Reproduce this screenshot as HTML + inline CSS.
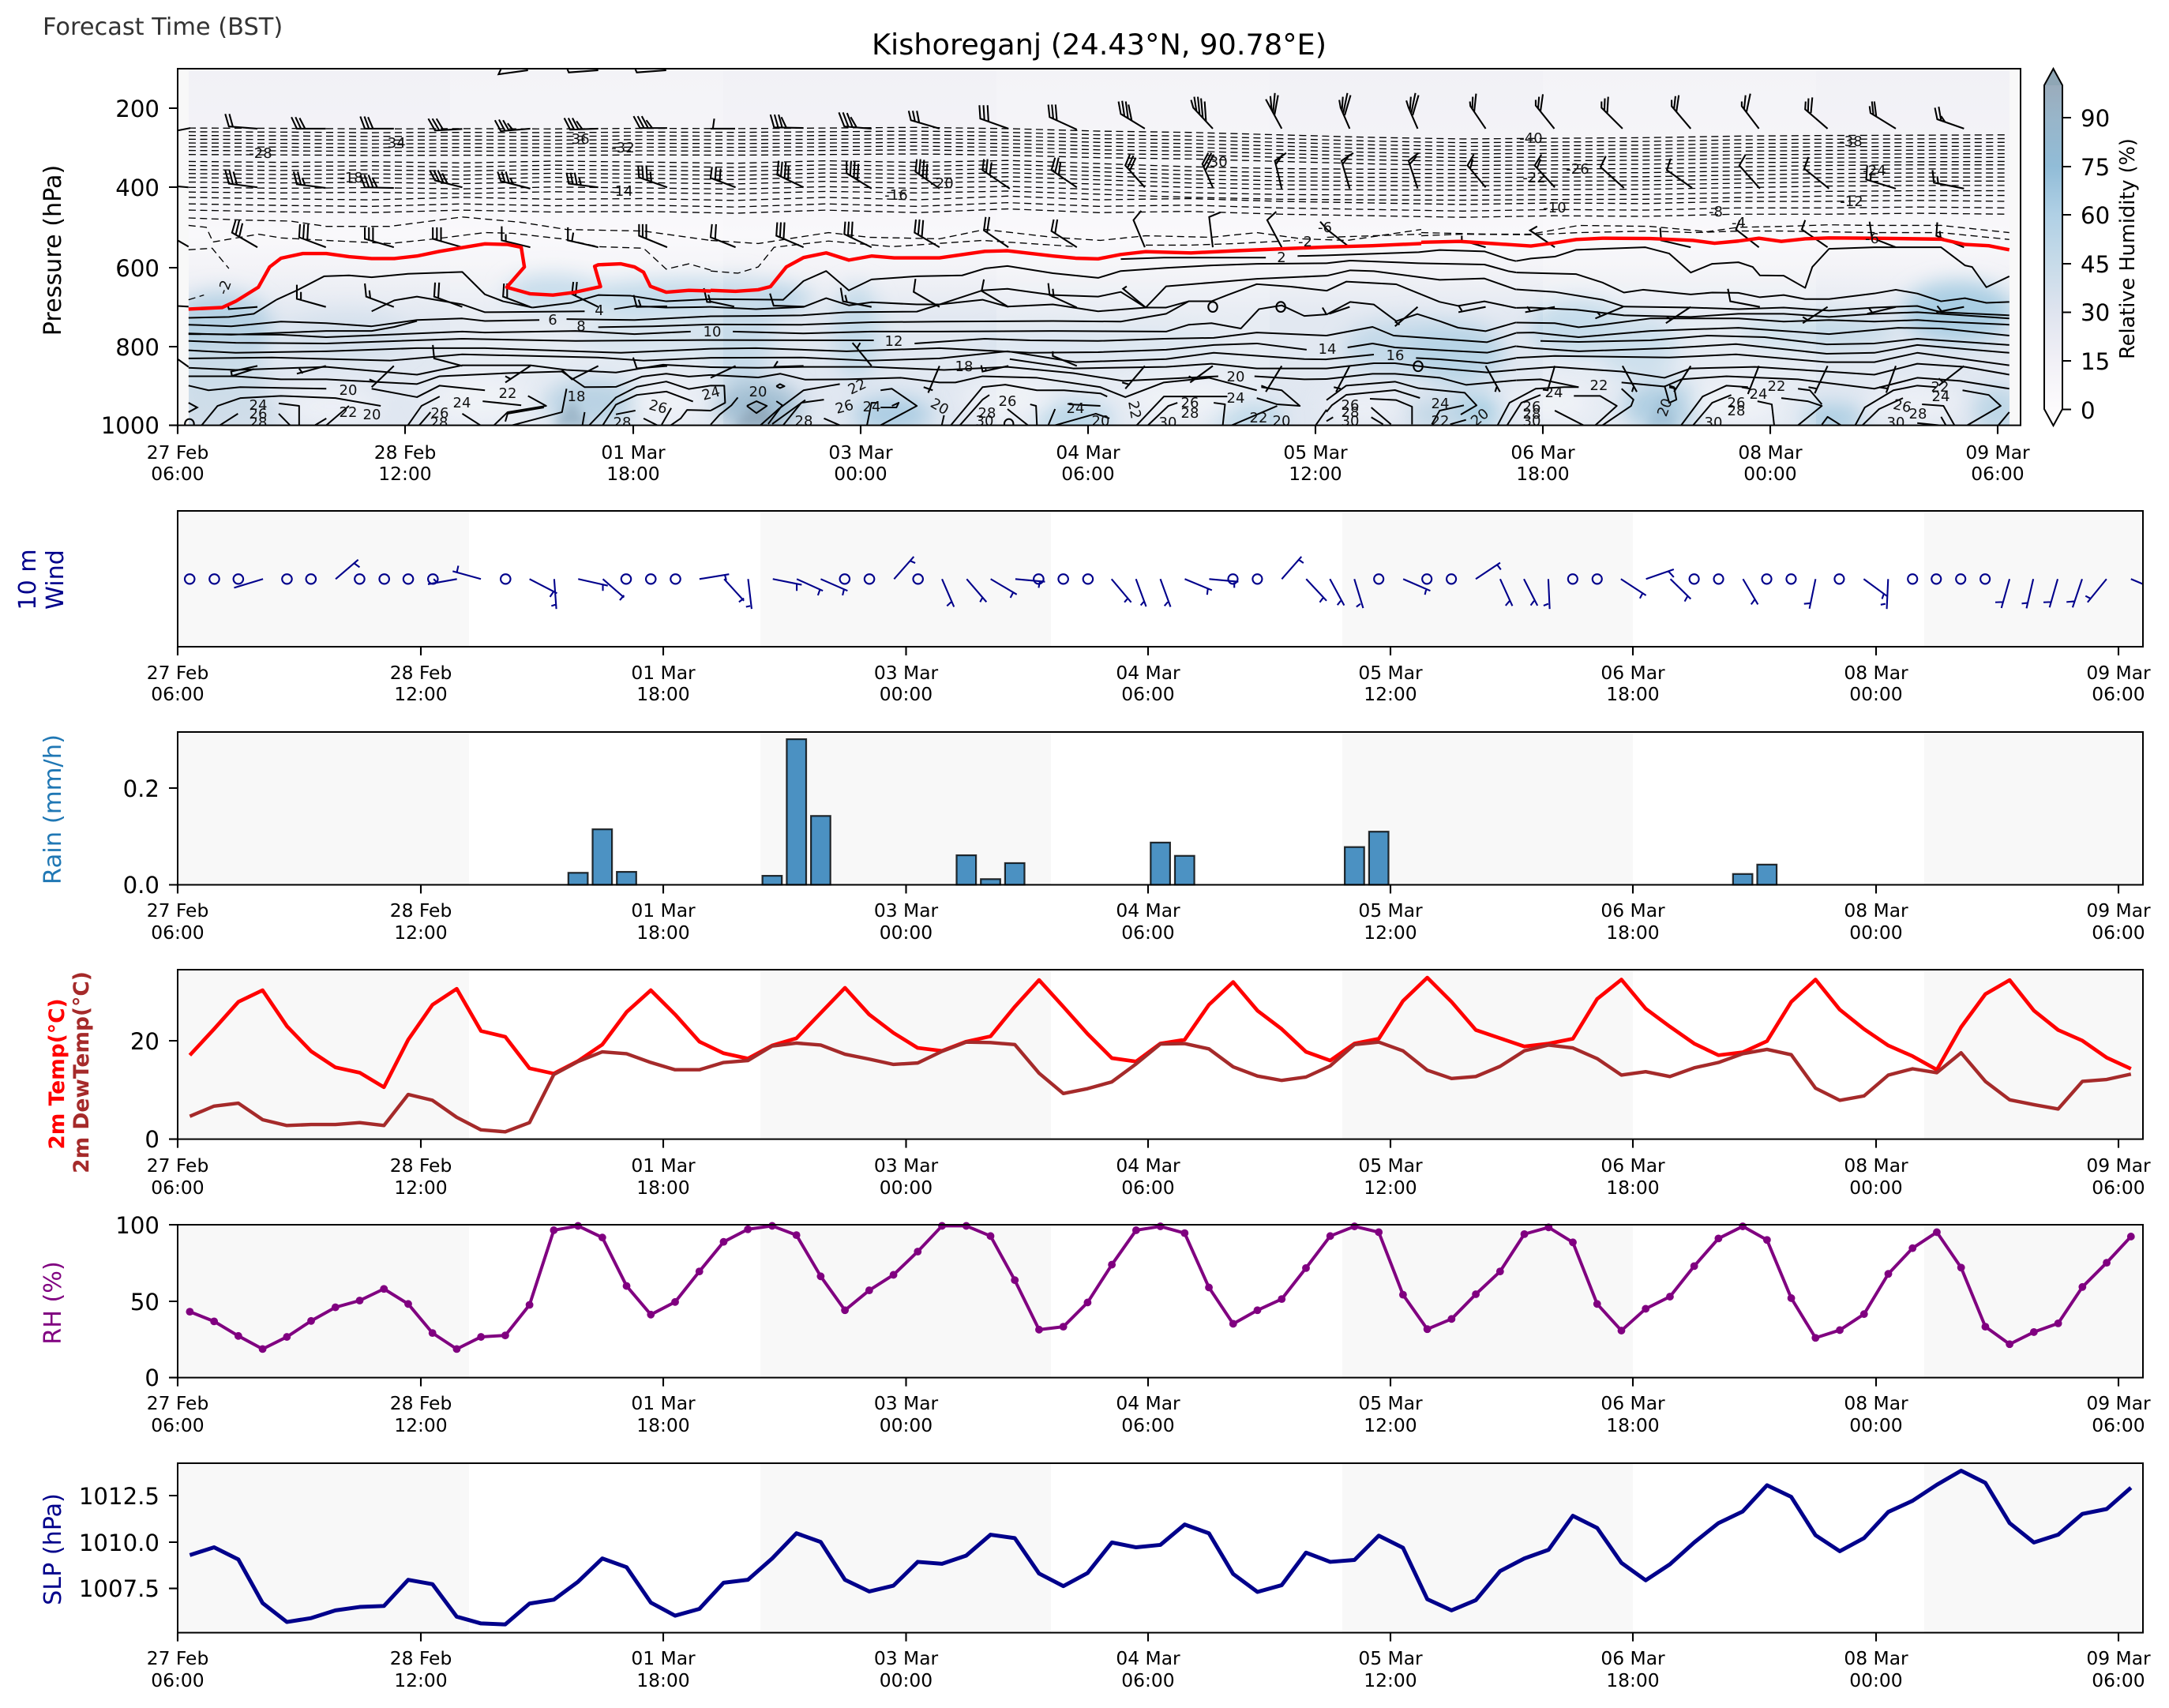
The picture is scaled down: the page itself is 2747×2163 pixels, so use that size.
<!DOCTYPE html>
<html><head><meta charset="utf-8"><title>Kishoreganj</title>
<style>
html,body{margin:0;padding:0;background:#fff}
svg{display:block}
text{font-family:"DejaVu Sans","Liberation Sans",sans-serif;fill:#000}
.ns *{vector-effect:non-scaling-stroke}
.c{fill:none;stroke:#000;stroke-width:2;stroke-linejoin:round}
.d{fill:none;stroke:#000;stroke-width:1.35;stroke-dasharray:9 5.5}
.b{fill:none;stroke:#000;stroke-width:2.1}
.w{fill:none;stroke:#00008b;stroke-width:2.1}
.x{font-size:23.4px;text-anchor:middle}
.y{font-size:29.2px;text-anchor:end}
.l{font-size:18px;text-anchor:middle;fill:#111}
.lab{font-size:30.2px;text-anchor:middle}
</style></head><body>
<svg width="2747" height="2163" viewBox="0 0 2747 2163" xmlns="http://www.w3.org/2000/svg">
<defs>
<clipPath id="tc"><rect x="225" y="87" width="2334" height="451.6"/></clipPath>
<clipPath id="dc"><rect x="239" y="87" width="2306" height="451.6"/></clipPath>
<clipPath id="wc"><rect x="225" y="647" width="2489" height="172"/></clipPath>
<filter id="bl" x="-5%" y="-20%" width="110%" height="140%"><feGaussianBlur stdDeviation="13"/></filter>
<filter id="bl2" x="-5%" y="-20%" width="110%" height="140%"><feGaussianBlur stdDeviation="6"/></filter>
<linearGradient id="bg" x1="0" y1="87" x2="0" y2="538" gradientUnits="userSpaceOnUse">
<stop offset="0" stop-color="#f1f1f6"/><stop offset=".3" stop-color="#f5f4f8"/><stop offset=".47" stop-color="#f9f8fb"/><stop offset=".56" stop-color="#f3f3f7"/><stop offset=".7" stop-color="#e2e8f1"/><stop offset="1" stop-color="#e0e7f1"/></linearGradient>
<linearGradient id="cb" x1="0" y1="108" x2="0" y2="518" gradientUnits="userSpaceOnUse">
<stop offset="0" stop-color="#9aacbc"/><stop offset=".1" stop-color="#98b5c9"/><stop offset=".25" stop-color="#91bcd7"/><stop offset=".4" stop-color="#b0d0e5"/><stop offset=".55" stop-color="#c7dbe9"/><stop offset=".7" stop-color="#dfe4ef"/><stop offset=".85" stop-color="#f1f0f6"/><stop offset="1" stop-color="#fdfbfd"/></linearGradient>
</defs>
<rect width="2747" height="2163" fill="#fff"/>

<text x="54" y="44" style="font-size:30.4px;fill:#333">Forecast Time (BST)</text>
<text x="1392" y="69" style="font-size:36.7px;text-anchor:middle">Kishoreganj (24.43°N, 90.78°E)</text>

<!-- TOP PANEL -->
<rect x="225" y="87" width="2334" height="451.6" fill="#f8f8f8"/>
<g clip-path="url(#dc)">
<rect x="239" y="87" width="2306" height="452" fill="url(#bg)"/>
<g filter="url(#bl)">
<ellipse cx="280" cy="415" rx="65" ry="45" fill="#b5d1e4"/>
<ellipse cx="280" cy="480" rx="60" ry="45" fill="#ccdde9"/>
<ellipse cx="440" cy="425" rx="80" ry="30" fill="#d5e1ed"/>
<ellipse cx="290" cy="525" rx="70" ry="25" fill="#cfdde9"/>
<ellipse cx="700" cy="370" rx="60" ry="22" fill="#bcd6e8"/>
<ellipse cx="880" cy="378" rx="150" ry="24" fill="#b5d3e6"/>
<ellipse cx="850" cy="425" rx="120" ry="30" fill="#d0e0ec"/>
<ellipse cx="935" cy="420" rx="45" ry="70" fill="#c8dcea"/>
<ellipse cx="750" cy="510" rx="60" ry="30" fill="#aac9de"/>
<ellipse cx="960" cy="515" rx="55" ry="32" fill="#a3bfd3"/>
<ellipse cx="1085" cy="420" rx="30" ry="60" fill="#c4dbea"/>
<ellipse cx="1130" cy="525" rx="50" ry="22" fill="#aacce2"/>
<ellipse cx="1360" cy="530" rx="50" ry="20" fill="#a8cde3"/>
<ellipse cx="1580" cy="530" rx="45" ry="18" fill="#b0d1e5"/>
<ellipse cx="1400" cy="435" rx="160" ry="22" fill="#d6e2ee"/>
<ellipse cx="1790" cy="440" rx="90" ry="35" fill="#c3d9e9"/>
<ellipse cx="1845" cy="448" rx="60" ry="38" fill="#b7d4e6"/>
<ellipse cx="1865" cy="522" rx="35" ry="22" fill="#a8cfe3"/>
<ellipse cx="2000" cy="415" rx="60" ry="35" fill="#b9d5e7"/>
<ellipse cx="2075" cy="440" rx="50" ry="40" fill="#c2d9e9"/>
<ellipse cx="2105" cy="515" rx="50" ry="30" fill="#9fc4dc"/>
<ellipse cx="1820" cy="525" rx="35" ry="20" fill="#c1d7e6"/>
<ellipse cx="2320" cy="530" rx="40" ry="18" fill="#aacde2"/>
<ellipse cx="2480" cy="395" rx="70" ry="38" fill="#a9cee3"/>
<ellipse cx="2300" cy="420" rx="100" ry="22" fill="#c6dbe9"/>
<ellipse cx="2530" cy="520" rx="30" ry="30" fill="#bcd6e6"/>
</g>
<g filter="url(#bl)" fill="#f1f3f8" opacity=".7">
<ellipse cx="600" cy="505" rx="65" ry="30"/><ellipse cx="420" cy="515" rx="60" ry="26"/><ellipse cx="840" cy="510" rx="45" ry="22"/>
<ellipse cx="1275" cy="505" rx="60" ry="26"/><ellipse cx="1500" cy="505" rx="70" ry="26"/><ellipse cx="1725" cy="515" rx="50" ry="22"/>
<ellipse cx="1960" cy="510" rx="55" ry="24"/><ellipse cx="2195" cy="510" rx="60" ry="26"/><ellipse cx="2425" cy="510" rx="60" ry="26"/>
</g>
<g filter="url(#bl2)">
<path d="M700 540L725 505L745 540Z" fill="#8aa9bf"/>
<path d="M930 540L960 505L990 540Z" fill="#93aabd"/>
<path d="M2085 540L2105 500L2125 540Z" fill="#8fb6d0"/>
</g>
<rect x="570" y="87" width="346" height="452" fill="#fff" opacity=".18"/>
<rect x="1262" y="87" width="346" height="452" fill="#fff" opacity=".18"/>
<rect x="1954" y="87" width="346" height="452" fill="#fff" opacity=".18"/>
</g>

<g clip-path="url(#tc)">
<!-- dashed family, i/zoom coordinates -->
<g class="ns" transform="translate(239,0) scale(28.81,.3954)">
<defs>
<polyline id="s1" class="d" points="0,410 4,411 8,413 12,412 16,413 20,411 24,412 28,410 32,408 36,412 40,420 44,424 48,432 52,440 56,445 60,443 64,441 68,436 72,434 76,433 80,432"/>
<polyline id="s2" class="d" points="0,517 4,520 8,518 12,522 16,516 20,519 24,523 28,515 32,520 36,514 40,524 44,534 48,540 52,542 56,543 60,541 64,540 68,535 72,530 76,528 80,528"/>
<polyline id="s3" class="d" points="0,632 4,637 8,640 12,632 16,638 20,636 24,642 28,632 32,640 36,628 40,640 44,636 48,645 52,650 56,655 60,650 64,652 68,645 72,645 76,642 80,645"/>
</defs>
<use href="#s1"/><use href="#s1" y="12"/><use href="#s1" y="24"/><use href="#s1" y="36"/><use href="#s1" y="48"/><use href="#s1" y="60"/><use href="#s1" y="72"/><use href="#s1" y="85"/>
<use href="#s2"/><use href="#s2" y="13"/><use href="#s2" y="26"/><use href="#s2" y="39"/><use href="#s2" y="52"/><use href="#s2" y="66"/><use href="#s2" y="83"/><use href="#s2" y="98"/>
<use href="#s3"/><use href="#s3" y="21"/><use href="#s3" y="41"/>
</g>

<!-- zoom 1 -->
<g class="ns" transform="scale(.574,.3954)">
<polyline class="d" points="416,698 540,705 640,708 720,725 860,725 1020,695 1150,712 1250,735 1420,740 1568,770"/>
<polyline class="d" points="470,775 570,750 620,762 720,770 860,780 960,765 1070,745 1130,747 1240,765 1320,790 1420,795 1470,862 1520,845 1568,865"/>
<polyline class="d" points="416,722 455,728 470,775"/>
<polyline class="d" points="416,800 468,795 505,860"/>
<polyline class="d" points="416,960 450,945"/>
<polyline class="c" points="610,960 655,930 715,885 770,882 820,888 900,877 1020,871 1070,943 1110,965 1175,985"/>
<polyline class="c" points="820,997 870,962 920,950 1020,975 1070,1000 1290,997"/>
<polyline class="c" points="1355,990 1400,980 1470,985 1568,983"/>
<polyline class="c" points="1175,985 1260,970 1320,945 1390,947 1470,965 1568,958"/>
<polyline class="c" points="416,1018 505,1015 560,1005 610,960"/>
<polyline class="c" points="416,1040 510,1045 620,1030 720,1035 820,1045 920,1025 1020,1020 1070,1028 1190,1025"/>
<polyline class="c" points="1250,1022 1400,1025 1568,1013"/>
<polyline class="c" points="416,1068 510,1072 720,1060 820,1060 870,1047 920,1028"/>
<polyline class="c" points="1320,1048 1440,1045 1568,1039"/>
<polyline class="c" points="416,1070 620,1072 720,1080 1020,1062 1070,1065 1270,1060 1400,1070 1524,1062"/>
<polyline class="c" points="416,1092 520,1098 720,1100 1020,1085 1270,1092 1568,1089"/>
<polyline class="c" points="416,1122 520,1130 720,1125 920,1115 1070,1115 1370,1130 1568,1117"/>
<polyline class="c" points="416,1148 600,1145 860,1155 1020,1135 1320,1145 1420,1155 1568,1146"/>
<polyline class="c" points="416,1178 520,1185 720,1175 920,1200 1020,1170 1170,1170 1250,1185 1359,1193 1463,1168 1568,1176"/>
<polyline class="c" points="416,1205 520,1205 620,1215 720,1215 920,1230 970,1205 1120,1195 1240,1190 1290,1240 1359,1239 1417,1206 1470,1197 1520,1206 1568,1201"/>
<polyline class="c" points="416,1235 460,1250 530,1240 720,1245"/>
<polyline class="c" points="820,1245 920,1272 970,1235 1070,1250"/>
<polyline class="c" points="445,1362 480,1300 530,1275 620,1268 740,1275 840,1300"/>
<polyline class="c" points="485,1362 525,1325"/>
<polyline class="c" points="615,1292 660,1300 660,1362"/>
<polyline class="c" points="615,1325 640,1362"/>
<polyline class="c" points="695,1362 720,1340"/>
<polyline class="c" points="720,1362 770,1300"/>
<polyline class="c" points="900,1362 930,1300 970,1270"/>
<polyline class="c" points="925,1362 950,1320"/>
<polyline class="c" points="1065,1285 1150,1298"/>
<polyline class="c" points="1020,1325 1060,1362"/>
<polyline class="c" points="1090,1362 1120,1320 1205,1300 1165,1268"/>
<polyline class="c" points="1115,1350 1120,1325 1200,1305"/>
<polyline class="c" points="1130,1362 1240,1320 1250,1245"/>
<polyline class="c" points="1285,1362 1290,1320"/>
<polyline class="c" points="1300,1362 1359,1273 1405,1239 1470,1222 1520,1246 1568,1235"/>
<polyline class="c" points="1330,1362 1359,1296 1405,1265 1470,1254 1529,1286"/>
<polyline class="c" points="1359,1327 1402,1315"/>
<polyline class="c" points="1481,1307 1460,1360"/>
<polyline class="c" points="1420,1340 1450,1362"/>
<polyline class="c" points="1568,1315 1516,1313 1502,1340 1480,1362"/>
<path class="b" d="M392 418L420 410M392 597L416 600M392 770L416 790M392 980L416 982M392 1150L416 1175M416 1290L435 1305L416 1320"/>
<ellipse class="b" cx="418" cy="1358" rx="10" ry="16"/>
<path class="b" d="M568 412L505 405L497 365M514 407L506 365M719 412L655 412L643 375M664 412L652 375M673 412L661 378M869 412L805 412L795 373M814 412L804 373M823 412L812 375M1020 413L960 418L945 380M969 417L954 380M978 416L963 380M1170 412L1105 420L1092 385M1114 419L1101 383M1123 418L1110 385M1132 417L1120 395M1320 412L1258 415L1245 378M1267 415L1254 378M1276 414L1263 378M1285 414L1272 388M1472 410L1412 410L1398 372M1421 410L1407 372M1430 410L1416 372M1439 410L1426 385"/>
<path class="b" d="M568 600L505 588L497 545M514 590L506 545M523 592L515 550M719 602L655 590L648 550M664 592L657 550M673 594L667 570M869 602L805 600L795 560M814 600L804 560M823 600L813 560M832 600L822 570M1020 600L960 578L948 545M969 581L957 545M978 584L966 545M987 587L976 555M1170 604L1105 580L1098 550M1114 583L1107 550M1123 586L1116 550M1132 589L1126 570M1320 600L1255 588L1250 553M1264 590L1259 553M1273 592L1268 553M1282 593L1278 570M1472 600L1410 568L1408 530M1419 572L1417 530M1428 576L1426 530M1437 580L1435 550"/>
<path class="b" d="M568 792L512 745L520 705M520 752L528 705M528 758L535 715M719 792L660 760L662 718M669 765L671 718M678 770L680 718M869 792L805 765L805 728M814 769L814 728M823 773L823 728M1020 792L955 765L955 728M964 769L964 728M973 773L973 728M1170 792L1107 770L1107 725M1116 773L1116 750M1320 792L1253 770L1253 728M1262 773L1265 745M1472 792L1410 755L1410 718M1418 760L1418 718M1426 765L1426 718"/>
<path class="b" d="M568 983L505 990L502 975M719 983L655 957L655 912M664 961L664 935M869 983L808 950L805 908M817 955L815 930M1020 983L958 950L960 905M967 954L969 905M1170 983L1110 950L1112 908M1119 954L1119 908M1320 983L1262 942L1265 903M1270 948L1273 903M1472 981L1405 983L1398 945M1414 982L1409 960M1568 968L1560 967L1553 923M1568 970L1563 944"/>
<path class="b" d="M568 1172L510 1190L512 1205M560 1182L510 1205M719 1172L655 1197M660 1180L668 1196M869 1172L820 1240M815 1215L832 1225M1020 1172L958 1148L955 1105M1170 1172L1115 1225M1115 1205L1128 1215M1320 1172L1262 1215L1240 1185M1472 1172L1405 1180L1397 1145"/>
<path class="b" d="M1165 225L1100 238L1105 222M1320 225L1255 232L1252 222M1470 225L1405 232L1402 222"/>
<polyline fill="none" stroke="#f00" stroke-width="4.4" stroke-linejoin="round" points="416,990 490,985 520,965 570,920 595,855 620,827 668,812 720,812 770,822 820,828 870,828 920,820 970,805 1020,793 1070,781 1120,783 1150,792 1157,855 1118,920 1170,941 1220,945 1265,937 1325,918 1312,853 1320,848 1370,845 1400,855 1420,872 1435,917 1470,936 1520,930 1568,932"/>
</g>

<!-- zoom 2 -->
<g class="ns" transform="translate(900,0) scale(.574,.3954)">
<polyline class="d" points="0,770 105,780 260,745 350,760 505,765 605,735 755,760 860,770 960,755 1105,760 1205,745 1305,765 1405,770 1568,735"/>
<polyline class="d" points="0,868 60,875 105,855 140,792 260,772 400,790 600,770 755,785 805,790"/>
<polyline class="d" points="960,785 1060,785 1160,780 1290,770"/>
<polyline class="d" points="1360,760 1568,750"/>
<polyline class="c" points="905,830 1000,825 1225,825"/>
<polyline class="c" points="1295,820 1359,818"/>
<polyline class="c" points="0,958 160,960 205,900 255,868 305,930 355,895 455,885 555,882 605,860 655,852 755,875 855,890 905,868 1005,858 1105,850 1205,845 1359,843"/>
<polyline class="c" points="0,983 100,990 205,983 255,955 305,978 355,968 455,975 505,975 600,930 655,925 705,935 755,945 855,950 905,935 960,985 1005,917 1105,905 1205,893 1359,883"/>
<polyline class="c" points="0,1013 100,1012 200,1010 300,1000 455,998 505,975 600,960 655,982 755,975 855,997 960,985 1005,985 1055,965 1105,965 1140,945 1205,910 1280,918 1359,931"/>
<polyline class="c" points="0,1039 200,1040 355,1032 505,1030 755,1028 905,1030 1005,1005 1055,965 1105,965"/>
<polyline class="c" points="49,1062 205,1068 355,1062 505,1062 755,1060 1005,1062 1055,1040 1105,1035 1170,1052 1210,990 1260,978 1310,1012 1359,1007"/>
<polyline class="c" points="0,1089 360,1090"/>
<polyline class="c" points="450,1100 605,1085 705,1090 855,1092 1000,1085 1110,1082 1205,1065 1359,1075"/>
<polyline class="c" points="0,1117 100,1115 300,1125 505,1115 705,1130 855,1128 1005,1120 1110,1105 1205,1100 1315,1120"/>
<polyline class="c" points="0,1146 200,1145 350,1155 505,1148 655,1125 805,1160 1005,1150 1110,1130 1310,1150 1359,1151"/>
<polyline class="c" points="660,1150 800,1180 1005,1175 1105,1165 1205,1180 1359,1180"/>
<polyline class="c" points="0,1176 105,1178 209,1175 355,1175 515,1185 655,1175 800,1195 910,1220 1120,1205"/>
<polyline class="c" points="1200,1205 1310,1215 1359,1214"/>
<polyline class="c" points="0,1201 105,1209 154,1197 209,1216 300,1215 420,1210 505,1225 540,1225 600,1205 720,1210 860,1240 915,1272 1000,1225 1100,1210 1205,1250"/>
<polyline class="c" points="0,1235 30,1235 32,1290 0,1315"/>
<polyline class="c" points="80,1300 101,1285 124,1300 101,1323 80,1300"/>
<polyline class="c" points="145,1237 153,1230 163,1237 153,1243 145,1237"/>
<polyline class="c" points="60,1273 46,1298 20,1328 0,1360"/>
<polyline class="c" points="145,1285 158,1298 127,1358"/>
<polyline class="c" points="209,1281 136,1358"/>
<polyline class="c" points="110,1362 150,1310 205,1250 265,1235 285,1230"/>
<polyline class="c" points="160,1362 200,1290 250,1280"/>
<polyline class="c" points="250,1340 285,1362"/>
<polyline class="c" points="345,1362 355,1290 370,1290"/>
<polyline class="c" points="375,1250 400,1245 455,1300 375,1362"/>
<polyline class="c" points="400,1300 415,1290 410,1305 375,1305"/>
<polyline class="c" points="510,1362 515,1330"/>
<polyline class="c" points="530,1362 600,1240 650,1232 720,1250 780,1250 860,1260 875,1270"/>
<polyline class="c" points="550,1362 600,1280 615,1265"/>
<polyline class="c" points="655,1310 700,1362"/>
<polyline class="c" points="705,1295 718,1300 720,1362"/>
<polyline class="c" points="745,1362 760,1310"/>
<polyline class="c" points="760,1362 850,1325 880,1340"/>
<polyline class="c" points="790,1295 860,1300"/>
<polyline class="c" points="940,1362 1000,1270 1140,1270"/>
<polyline class="c" points="965,1362 1010,1300 1030,1290"/>
<polyline class="c" points="1110,1290 1135,1295 1130,1362"/>
<polyline class="c" points="1205,1275 1250,1295 1300,1300 1260,1250 1215,1240"/>
<polyline class="c" points="1150,1362 1250,1300"/>
<polyline class="c" points="1335,1362 1359,1312"/>
<ellipse class="b" cx="1108" cy="983" rx="10" ry="16"/><ellipse class="b" cx="1258" cy="983" rx="10" ry="16"/><ellipse class="b" cx="1561" cy="1173" rx="10" ry="16"/><ellipse class="b" cx="658" cy="1358" rx="10" ry="16"/>
<path class="b" d="M54 412L0 412M5 412L8 380M205 410L140 408L132 367M149 408L141 367M158 409L150 367M167 409L156 375M355 412L295 405L283 360M304 406L292 360M313 407L301 362M322 408L309 375M505 412L442 385L437 355M451 389L446 355M460 392L455 355M657 412L595 380L593 337M604 384L602 337M613 389L611 337M808 415L748 375L745 335M756 381L753 335M764 387L761 335M958 412L905 365L900 325M913 372L908 323M921 379L916 325M929 386L922 335M1108 412L1065 345L1060 320M1072 356L1067 310M1079 367L1075 310M1086 378L1082 315M1093 389L1090 325M1260 412L1235 345L1225 318M1238 353L1235 308M1241 361L1245 298M1244 369L1252 305M1410 412L1390 345L1387 320M1393 353L1395 310M1396 361L1405 298M1399 369L1412 305M1560 412L1540 345L1535 322M1543 353L1545 310M1546 361L1555 298M1549 369L1562 305"/>
<path class="b" d="M55 600L0 570L3 535M10 575L12 535M20 581L22 540M205 600L147 560L150 515M155 566L158 518M163 572L166 520M171 578L172 530M355 604L300 555L300 515M308 562L310 515M316 569L318 518M324 576L326 525M505 604L452 550L455 510M460 558L463 510M468 566L471 512M476 574L478 525M660 604L600 545L603 510M608 553L611 510M616 561L620 520M808 600L752 545L760 505M760 553L768 505M768 561L772 520M958 600L915 530L925 495M920 538L933 498M925 546L938 505M1108 600L1085 525L1098 490M1088 535L1105 490M1092 545L1110 495M1260 604L1245 515L1270 490M1247 527L1262 495M1410 604L1392 515L1418 490M1394 527L1410 495M1560 604L1540 515L1562 490M1543 525L1558 500"/>
<path class="b" d="M55 792L0 760L3 718M10 766L12 718M205 792L145 755L147 712M153 760L155 712M161 765L163 712M355 792L295 750L297 710M303 756L305 710M311 762L313 710M505 792L450 745L453 703M458 752L461 703M466 759L469 705M657 792L603 738L607 695M610 745L615 695M808 792L752 740L757 703M760 748L765 703M958 792L933 705L950 675M1108 792L1100 695L1125 680M1260 792L1228 705L1248 678M1410 792L1360 735L1345 710"/>
<path class="b" d="M52 982L0 966M206 982L139 979L131 940M355 983L292 965L287 922M301 968L297 945M505 983L448 935L452 893M657 983L598 932L603 895M808 985L748 945L745 907M757 950L755 925M960 985L910 925L918 917M1410 983L1365 1005M1350 985L1358 1005M1560 983L1510 1045M1510 1030L1520 1040"/>
<path class="b" d="M55 1172L0 1210M205 1172L140 1175L148 1157M355 1172L320 1110L313 1098M323 1115L330 1098M505 1172L480 1258M470 1240L490 1250M657 1172L600 1190L597 1170M608 1186L606 1182M808 1172L755 1140L755 1125M958 1172L915 1245M908 1225L925 1232M1108 1172L1058 1225M1055 1205L1068 1215M1260 1172L1225 1255M1215 1235L1232 1245M1410 1172L1380 1255M1375 1240L1390 1245"/>
<polyline fill="none" stroke="#f00" stroke-width="4.4" stroke-linejoin="round" points="0,930 55,933 105,928 132,918 167,855 205,825 255,810 305,833 355,820 405,826 505,826 605,805 655,803 755,820 805,827 855,829 905,815 960,806 1060,810 1160,803 1260,797 1360,791 1460,787 1568,780"/>
</g>

<!-- seam region 1680-1920 -->
<g class="ns" transform="translate(1680,300) scale(.33333)">
<polyline class="c" points="0,70 350,58 430,50 600,55 690,85 720,92"/>
<polyline class="c" points="0,100 90,90 350,100 600,105 690,130 720,135"/>
<polyline class="c" points="0,148 90,127 180,130 430,163 600,158 720,200"/>
<polyline class="c" points="0,205 75,170 265,180 430,247 500,262 600,245 720,270"/>
<polyline class="c" points="0,295 90,247 180,257 265,320 345,293 430,320 500,345 605,358 720,325"/>
<polyline class="c" points="0,375 175,342 255,375 400,385 610,400 720,365"/>
<polyline class="c" points="80,420 175,405 260,420 430,430 610,440 720,415"/>
<polyline class="c" points="0,465 180,447"/>
<polyline class="c" points="340,460 430,465 610,480 720,460"/>
<polyline class="c" points="0,500 180,480 260,480 400,497 610,515 720,505"/>
<polyline class="c" points="0,540 175,520 260,520 430,535 530,562 720,545"/>
<polyline class="c" points="0,620 75,565 260,550 350,575 525,592 570,640 510,675"/>
<polyline class="c" points="0,665 20,640 75,600 260,582 355,612"/>
<polyline class="c" points="165,615 265,620 325,645 325,712"/>
<polyline class="c" points="170,648 245,712"/>
<polyline class="c" points="170,685 215,712"/>
<polyline class="c" points="400,712 430,660 522,640"/>
<polyline class="c" points="470,712 530,695"/>
<polyline class="c" points="0,700 25,685"/>
</g>

<!-- zoom 3 -->
<g class="ns" transform="translate(1800,0) scale(.604,.3954)">
<polyline class="d" points="0,745 140,750 230,750 330,722 480,725 600,742 665,728 760,725 855,720 950,722 1090,722 1233,745"/>
<polyline class="d" points="0,755 85,750 230,752 330,745 480,740 570,745 665,740 760,740 950,745 1090,745 1233,767"/>
<polyline class="c" points="199,836 230,828 280,822 325,800 470,792 520,812 565,873 610,845 665,840 695,855 710,882 760,883 805,922 820,855 855,797 950,792 1090,792 1140,850 1155,855 1185,920 1233,885"/>
<polyline class="c" points="199,873 325,878 380,905 425,937 465,928 565,943 610,937 665,938 710,952 760,945 805,958 855,958 950,940 995,928 1040,940 1090,965 1140,955 1185,970 1233,967"/>
<polyline class="c" points="199,927 280,935 380,960 425,982 565,985 665,990 760,985 855,995 950,985 1040,980 1090,1000 1233,1010"/>
<polyline class="c" points="199,986 230,985 325,992 425,1010 565,1015 665,1005 760,1005 855,1015 950,1005 1040,1000 1233,1020"/>
<polyline class="c" points="199,1033 280,1035 330,1048 380,1040 480,1020 565,1020 665,1020 760,1030 855,1025 950,1030 1040,1025 1090,1030 1233,1040"/>
<polyline class="c" points="199,1066 235,1065 330,1080 480,1060 565,1055 665,1050 760,1060 855,1070 1000,1050 1090,1052 1233,1075"/>
<polyline class="c" points="250,1092 330,1095 480,1090 600,1075 720,1080 850,1103 950,1100 1040,1085 1233,1105"/>
<polyline class="c" points="199,1109 235,1115 330,1125 520,1115 660,1102 850,1133 950,1130 1040,1105 1233,1130"/>
<polyline class="c" points="199,1146 280,1140 520,1145 660,1135 850,1160 950,1160 1040,1130 1233,1170"/>
<polyline class="c" points="199,1184 280,1175 420,1190 510,1210 565,1180 700,1175 850,1190 950,1200 1040,1165 1140,1175 1233,1200"/>
<polyline class="c" points="199,1218 250,1215 330,1240"/>
<polyline class="c" points="420,1225 510,1238 545,1215 640,1205 790,1215 950,1245 1040,1210 1130,1220 1233,1245"/>
<polyline class="c" points="160,1362 185,1290 240,1245 300,1240 330,1240"/>
<polyline class="c" points="180,1362 210,1290 250,1265"/>
<polyline class="c" points="320,1268 375,1268 410,1300 365,1362"/>
<polyline class="c" points="280,1315 340,1362"/>
<polyline class="c" points="380,1362 440,1300 445,1280 420,1245"/>
<polyline class="c" points="545,1362 590,1270 640,1235 685,1240"/>
<polyline class="c" points="570,1362 610,1290 650,1265"/>
<polyline class="c" points="705,1285 735,1295 740,1362"/>
<polyline class="c" points="755,1275 810,1285 840,1300 790,1362"/>
<polyline class="c" points="790,1245 815,1250 840,1295"/>
<polyline class="c" points="910,1362 930,1305 990,1250 1040,1235 1080,1240"/>
<polyline class="c" points="925,1362 960,1310 1010,1275"/>
<polyline class="c" points="1050,1295 1095,1300 1118,1362"/>
<polyline class="c" points="1135,1250 1190,1265 1215,1300 1145,1362"/>
<polyline class="c" points="1210,1362 1233,1320"/>
<polyline class="c" points="1090,1335 1100,1362"/>
<polyline class="c" points="1040,1355 1085,1362"/>
<polyline class="c" points="840,1360 852,1335 880,1362"/>
<polyline class="c" points="510,1235 520,1290 535,1280 530,1240 520,1235"/>
<path class="b" d="M135 412L103 340L102 325M107 349L108 310M111 358L115 300M279 412L240 338L240 320M245 347L247 310M250 356L255 302M422 412L378 345L378 325M384 353L385 315M390 361L392 310M565 412L525 340L525 320M530 349L533 308M535 358L540 305M708 412L672 340L672 325M677 349L680 305M682 358L690 300M852 412L805 350L806 325M811 356L812 315M817 362L820 312M995 412L942 362L940 340M948 367L945 325M954 372L950 325M1138 412L1082 382L1077 345M1090 386L1085 342M1098 390L1090 372"/>
<path class="b" d="M135 600L97 530L110 495M103 538L108 510M280 600L238 530L252 495M243 538L250 510M425 602L376 535L387 500M568 602L515 545L523 508M710 604L667 530L680 495M855 604L803 540L812 503M995 604L933 575L935 530M942 580L943 555M1138 604L1075 585L1072 545M1084 588L1082 565"/>
<path class="b" d="M135 792L85 770L85 755M280 792L228 738L243 725M565 792L503 770L501 730M708 792L660 735L668 705M852 792L798 735L805 705M995 792L945 762L940 710M1138 792L1080 755L1082 712M1089 760L1087 740"/>
<path class="b" d="M135 983L78 1000M78 978L85 995M280 983L218 1000M222 982L228 995M423 983L365 1020M368 998L375 1010M565 983L513 1035M515 1015L525 1025M710 983L648 965L643 925M852 983L800 1035M800 1015L810 1025M995 983L935 1005M938 985L945 1000M1138 983L1080 1000M1082 980L1090 995"/>
<path class="b" d="M135 1172L165 1255M158 1240L155 1255M280 1172L265 1250L255 1248M422 1172L452 1255M445 1240L442 1255M565 1172L530 1255M520 1240L535 1245M708 1172L685 1262M672 1240L690 1245M852 1172L825 1260M812 1240L830 1245M995 1172L975 1258M960 1240L980 1245M1138 1172L1085 1235M1085 1212L1095 1225"/>
<polyline fill="none" stroke="#f00" stroke-width="4.4" stroke-linejoin="round" points="0,776 80,773 130,778 230,788 280,778 325,767 380,763 480,764 570,770 615,779 665,772 708,763 755,773 805,765 855,762 950,763 1090,766 1140,783 1190,787 1233,800"/>
</g>

<g class="l-g">
<text class="l" x="330" y="200">-28</text><text class="l" x="499" y="187">-34</text><text class="l" x="732" y="182">-36</text><text class="l" x="789" y="193">-32</text><text class="l" x="445" y="231">-18</text><text class="l" x="787" y="248">-14</text>
<text class="l" transform="translate(290,366) rotate(-70)">-2</text><text class="l" x="700" y="411">6</text><text class="l" x="736" y="419">8</text><text class="l" x="759" y="399">4</text><text class="l" x="902" y="426">10</text>
<text class="l" x="441" y="500">20</text><text class="l" x="643" y="504">22</text><text class="l" x="585" y="516">24</text><text class="l" x="730" y="508">18</text><text class="l" x="327" y="519">24</text><text class="l" x="327" y="530">26</text><text class="l" x="327" y="541">28</text><text class="l" x="441" y="528">22</text><text class="l" x="471" y="531">20</text><text class="l" x="557" y="529">26</text><text class="l" x="556" y="541">28</text>
<text class="l" transform="translate(832,521) rotate(15)">26</text><text class="l" x="788" y="541">28</text>
<text class="l" x="1132" y="438">12</text><text class="l" x="1681" y="448">14</text><text class="l" x="1767" y="456">16</text><text class="l" x="1221" y="470">18</text><text class="l" x="1565" y="483">20</text><text class="l" transform="translate(902,504) rotate(-15)">24</text><text class="l" x="960" y="502">20</text>
<text class="l" transform="translate(1088,495) rotate(-25)">22</text><text class="l" transform="translate(1071,521) rotate(-15)">26</text><text class="l" x="1104" y="521">24</text><text class="l" transform="translate(1187,520) rotate(30)">20</text>
<text class="l" x="1018" y="539">28</text><text class="l" x="1276" y="514">26</text><text class="l" x="1250" y="529">28</text><text class="l" x="1247" y="539">30</text><text class="l" x="1362" y="523">24</text><text class="l" transform="translate(1431,520) rotate(80)">22</text><text class="l" x="1394" y="539">20</text>
<text class="l" x="1507" y="516">26</text><text class="l" x="1507" y="529">28</text><text class="l" x="1479" y="541">30</text><text class="l" x="1565" y="510">24</text><text class="l" x="1594" y="535">22</text><text class="l" x="1623" y="539">20</text><text class="l" x="1710" y="519">26</text><text class="l" x="1710" y="528">28</text><text class="l" x="1710" y="539">30</text>
<text class="l" x="1193" y="238">-20</text><text class="l" x="1540" y="211">-30</text><text class="l" x="1135" y="253">-16</text><text class="l" x="1678" y="294">-6</text><text class="l" x="1653" y="312">-2</text><text class="l" x="1623" y="332">2</text>
<text class="l" x="1939" y="181">-40</text><text class="l" x="2344" y="185">-38</text><text class="l" x="1998" y="220">-26</text><text class="l" x="1943" y="231">-22</text><text class="l" x="2374" y="222">-24</text><text class="l" x="1969" y="269">-10</text><text class="l" x="2345" y="261">-12</text><text class="l" x="2173" y="274">-8</text><text class="l" x="2202" y="288">-4</text><text class="l" x="2371" y="308">-6</text>
<text class="l" x="2025" y="494">22</text><text class="l" x="1968" y="503">24</text><text class="l" x="1824" y="517">24</text><text class="l" transform="translate(1878,533) rotate(-40)">20</text><text class="l" x="1824" y="539">22</text><text class="l" x="1940" y="521">26</text><text class="l" x="1940" y="530">28</text><text class="l" x="1940" y="539">30</text>
<text class="l" transform="translate(2114,518) rotate(-70)">20</text><text class="l" x="2227" y="505">24</text><text class="l" x="2250" y="495">22</text><text class="l" x="2199" y="516">26</text><text class="l" x="2199" y="526">28</text><text class="l" x="2170" y="541">30</text>
<text class="l" transform="translate(2408,520) rotate(12)">26</text><text class="l" x="2429" y="530">28</text><text class="l" x="2401" y="541">30</text><text class="l" x="2457" y="496">22</text><text class="l" x="2458" y="508">24</text>
</g>
</g>
<rect x="225" y="87" width="2334" height="451.6" fill="none" stroke="#000" stroke-width="2"/>
<path class="b" d="M225 538.6v11M513 538.6v11M802 538.6v11M1090 538.6v11M1378 538.6v11M1666 538.6v11M1954 538.6v11M2242 538.6v11M2530 538.6v11M225 137h-11M225 237h-11M225 339h-11M225 439h-11M225 538.6h-11"/>
<text class="y" x="202" y="148">200</text><text class="y" x="202" y="248">400</text><text class="y" x="202" y="350">600</text><text class="y" x="202" y="450">800</text><text class="y" x="202" y="549">1000</text>
<text class="lab" transform="translate(77,317) rotate(-90)">Pressure (hPa)</text>
<text class="x" x="225" y="581">27 Feb</text><text class="x" x="225" y="608">06:00</text>
<text class="x" x="513" y="581">28 Feb</text><text class="x" x="513" y="608">12:00</text>
<text class="x" x="802" y="581">01 Mar</text><text class="x" x="802" y="608">18:00</text>
<text class="x" x="1090" y="581">03 Mar</text><text class="x" x="1090" y="608">00:00</text>
<text class="x" x="1378" y="581">04 Mar</text><text class="x" x="1378" y="608">06:00</text>
<text class="x" x="1666" y="581">05 Mar</text><text class="x" x="1666" y="608">12:00</text>
<text class="x" x="1954" y="581">06 Mar</text><text class="x" x="1954" y="608">18:00</text>
<text class="x" x="2242" y="581">08 Mar</text><text class="x" x="2242" y="608">00:00</text>
<text class="x" x="2530" y="581">09 Mar</text><text class="x" x="2530" y="608">06:00</text>

<!-- colorbar -->
<path d="M2589 108L2600.5 87L2612 108Z" fill="#8fa6b5"/>
<path d="M2589 108L2612 108L2612 518L2600.5 539L2589 518Z" fill="url(#cb)"/>
<path d="M2589 108L2600.5 87L2612 108L2612 518L2600.5 539L2589 518Z" fill="none" stroke="#000" stroke-width="2"/>
<path class="b" d="M2612 518.5h11M2612 457h11M2612 395.5h11M2612 334h11M2612 272h11M2612 211h11M2612 149h11"/>
<g style="font-size:29.2px"><text x="2635" y="530">0</text><text x="2635" y="468">15</text><text x="2635" y="406">30</text><text x="2635" y="345">45</text><text x="2635" y="283">60</text><text x="2635" y="222">75</text><text x="2635" y="160">90</text></g>
<text transform="translate(2703,315) rotate(-90)" style="font-size:25.6px;text-anchor:middle">Relative Humidity (%)</text>

<!-- WIND -->
<g fill="#f8f8f8"><rect x="225" y="647" width="369" height="172"/><rect x="963" y="647" width="368" height="172"/><rect x="1700" y="647" width="368" height="172"/><rect x="2437" y="647" width="277" height="172"/></g>
<g clip-path="url(#wc)">
<g class="ns" transform="translate(0,620) scale(.893,.3827)">
<g class="w">
<ellipse cx="269" cy="296" rx="7" ry="16"/><ellipse cx="304" cy="296" rx="7" ry="16"/><ellipse cx="338" cy="296" rx="7" ry="16"/><ellipse cx="407" cy="296" rx="7" ry="16"/><ellipse cx="441" cy="296" rx="7" ry="16"/><ellipse cx="510" cy="296" rx="7" ry="16"/><ellipse cx="545" cy="296" rx="7" ry="16"/><ellipse cx="579" cy="296" rx="7" ry="16"/><ellipse cx="614" cy="296" rx="7" ry="16"/><ellipse cx="717" cy="296" rx="7" ry="16"/><ellipse cx="888" cy="296" rx="7" ry="16"/><ellipse cx="923" cy="296" rx="7" ry="16"/><ellipse cx="958" cy="296" rx="7" ry="16"/><ellipse cx="1198" cy="296" rx="7" ry="16"/><ellipse cx="1233" cy="296" rx="7" ry="16"/><ellipse cx="1302" cy="296" rx="7" ry="16"/><ellipse cx="1473" cy="296" rx="7" ry="16"/><ellipse cx="1508" cy="296" rx="7" ry="16"/><ellipse cx="1543" cy="296" rx="7" ry="16"/>
<path d="M373 296L332 325M476 296L508 232M503 245L510 257M648 296L607 313M615 296L620 308M682 296L642 270M650 252L648 273M751 296L790 343M785 338L780 355M786 296L789 395M789 380L782 385M820 296L862 318M855 315L855 335M855 296L885 357M885 350L879 366M992 296L1034 280M1028 282L1030 300M1027 296L1055 368M1055 360L1048 372M1061 296L1066 395M1064 385L1058 388M1096 296L1137 315M1130 310L1130 335M1130 296L1167 335M1163 330L1160 350M1164 296L1202 335M1197 330L1195 350M1268 296L1296 222M1290 235L1298 243M1336 296L1353 388M1349 372L1343 385M1371 296L1399 372M1394 355L1390 372M1405 296L1442 347M1437 340L1433 358M1440 296L1482 305M1475 303L1473 325"/>
</g></g>
<g class="ns" transform="translate(1400,620) scale(.859,.3827)">
<g class="w">
<ellipse cx="188" cy="296" rx="7" ry="16"/><ellipse cx="224" cy="296" rx="7" ry="16"/><ellipse cx="403" cy="296" rx="7" ry="16"/><ellipse cx="474" cy="296" rx="7" ry="16"/><ellipse cx="510" cy="296" rx="7" ry="16"/><ellipse cx="689" cy="296" rx="7" ry="16"/><ellipse cx="725" cy="296" rx="7" ry="16"/><ellipse cx="868" cy="296" rx="7" ry="16"/><ellipse cx="904" cy="296" rx="7" ry="16"/><ellipse cx="975" cy="296" rx="7" ry="16"/><ellipse cx="1011" cy="296" rx="7" ry="16"/><ellipse cx="1082" cy="296" rx="7" ry="16"/><ellipse cx="1190" cy="296" rx="7" ry="16"/><ellipse cx="1225" cy="296" rx="7" ry="16"/><ellipse cx="1261" cy="296" rx="7" ry="16"/><ellipse cx="1297" cy="296" rx="7" ry="16"/>
<path d="M9 296L38 373M33 360L28 373M45 296L60 387M57 370L52 383M81 296L96 388M92 372L87 385M117 296L157 333M151 328L150 348M153 296L196 305M190 303L190 325M260 296L289 222M285 232L292 243M296 296L326 368M321 358L316 373M331 296L352 383M347 368L342 382M367 296L380 392M376 378L370 388M439 296L479 335M473 330L471 348M546 296L582 242M578 250L583 265M582 296L600 385M596 368L590 384M617 296L637 384M632 368L627 383M653 296L655 395M653 378L646 384M760 296L797 350M792 343L788 360M797 296L838 264M830 270L838 290M833 296L863 362M858 354L854 370M940 296L962 380M957 365L952 380M1047 296L1038 394M1039 376L1030 378M1118 296L1152 352M1148 343L1145 362M1154 296L1152 395M1150 378L1143 381M1333 296L1321 392M1323 372L1312 373M1368 296L1358 393M1360 375L1351 377M1404 296L1392 390M1394 372L1383 373M1440 296L1426 390M1428 370L1417 372M1476 296L1448 373M1452 360L1445 352M1512 296L1530 313"/>
</g></g>
</g>
<rect x="225" y="647" width="2489" height="172" fill="none" stroke="#000" stroke-width="2"/>
<path class="b" d="M225 819v11M533 819v11M840 819v11M1147.5 819v11M1454 819v11M1761 819v11M2068 819v11M2376 819v11M2683 819v11"/>
<text class="lab" style="fill:#00008b" transform="translate(45,734) rotate(-90)">10 m</text><text class="lab" style="fill:#00008b" transform="translate(80,734) rotate(-90)">Wind</text>
<text class="x" x="225" y="860">27 Feb</text><text class="x" x="225" y="887">06:00</text><text class="x" x="533" y="860">28 Feb</text><text class="x" x="533" y="887">12:00</text><text class="x" x="840" y="860">01 Mar</text><text class="x" x="840" y="887">18:00</text><text class="x" x="1147.5" y="860">03 Mar</text><text class="x" x="1147.5" y="887">00:00</text><text class="x" x="1454" y="860">04 Mar</text><text class="x" x="1454" y="887">06:00</text><text class="x" x="1761" y="860">05 Mar</text><text class="x" x="1761" y="887">12:00</text><text class="x" x="2068" y="860">06 Mar</text><text class="x" x="2068" y="887">18:00</text><text class="x" x="2376" y="860">08 Mar</text><text class="x" x="2376" y="887">00:00</text><text class="x" x="2683" y="860">09 Mar</text><text class="x" x="2683" y="887">06:00</text>

<!-- RAIN -->
<g fill="#f8f8f8"><rect x="225" y="927" width="369" height="193.5"/><rect x="963" y="927" width="368" height="193.5"/><rect x="1700" y="927" width="368" height="193.5"/><rect x="2437" y="927" width="277" height="193.5"/></g>
<g fill="#1f77b4" fill-opacity=".8" stroke="#000" stroke-opacity=".8" stroke-width="2.2">
<rect x="719.8" y="1105.3" width="24.6" height="15.2"/><rect x="750.5" y="1050.2" width="24.6" height="70.3"/><rect x="781.2" y="1104.1" width="24.6" height="16.4"/>
<rect x="965.6" y="1109.1" width="24.6" height="11.4"/><rect x="996.4" y="936.1" width="24.6" height="184.4"/><rect x="1027.1" y="1033.3" width="24.6" height="87.2"/>
<rect x="1211.5" y="1083.1" width="24.6" height="37.4"/><rect x="1242.2" y="1113.3" width="24.6" height="7.2"/><rect x="1272.9" y="1093" width="24.6" height="27.5"/>
<rect x="1457.3" y="1067" width="24.6" height="53.5"/><rect x="1488" y="1083.8" width="24.6" height="36.7"/>
<rect x="1703.1" y="1072.7" width="24.6" height="47.8"/><rect x="1733.9" y="1053.2" width="24.6" height="67.3"/>
<rect x="2194.8" y="1106.8" width="24.6" height="13.7"/><rect x="2225.5" y="1094.9" width="24.6" height="25.6"/>
</g>
<rect x="225" y="927" width="2489" height="193.5" fill="none" stroke="#000" stroke-width="2"/>
<path class="b" d="M225 1120.5v11M533 1120.5v11M840 1120.5v11M1147.5 1120.5v11M1454 1120.5v11M1761 1120.5v11M2068 1120.5v11M2376 1120.5v11M2683 1120.5v11M225 998h-11M225 1120.5h-11"/>
<text class="y" x="202" y="1009">0.2</text><text class="y" x="202" y="1131">0.0</text>
<text class="lab" style="fill:#1f77b4;font-size:30.6px" transform="translate(77,1025) rotate(-90)">Rain (mm/h)</text>
<text class="x" x="225" y="1161">27 Feb</text><text class="x" x="225" y="1189">06:00</text><text class="x" x="533" y="1161">28 Feb</text><text class="x" x="533" y="1189">12:00</text><text class="x" x="840" y="1161">01 Mar</text><text class="x" x="840" y="1189">18:00</text><text class="x" x="1147.5" y="1161">03 Mar</text><text class="x" x="1147.5" y="1189">00:00</text><text class="x" x="1454" y="1161">04 Mar</text><text class="x" x="1454" y="1189">06:00</text><text class="x" x="1761" y="1161">05 Mar</text><text class="x" x="1761" y="1189">12:00</text><text class="x" x="2068" y="1161">06 Mar</text><text class="x" x="2068" y="1189">18:00</text><text class="x" x="2376" y="1161">08 Mar</text><text class="x" x="2376" y="1189">00:00</text><text class="x" x="2683" y="1161">09 Mar</text><text class="x" x="2683" y="1189">06:00</text>

<!-- TEMP -->
<g fill="#f8f8f8"><rect x="225" y="1228" width="369" height="214.6"/><rect x="963" y="1228" width="368" height="214.6"/><rect x="1700" y="1228" width="368" height="214.6"/><rect x="2437" y="1228" width="277" height="214.6"/></g>
<g class="ns" transform="translate(240.4,1200) scale(30.73,.614)" fill="none" stroke-linejoin="round">
<polyline stroke="#f00" stroke-width="4.7" points="0,222 1,168 2,112 3,88 4,162 5,214 6,247 7,258 8,288 9,190 10,118 11,85 12,172 13,184 14,249 15,260 16,234 17,200 18,133 19,88 20,138 21,194 22,218 23,229 24,202 25,187 26,135 27,83 28,138 29,176 30,207 31,213 32,194 33,183 34,122 35,67 36,122 37,178 38,228 39,235 40,198 41,190 42,118 43,71 44,130 45,168 46,215 47,233 48,198 49,188 50,110 51,62 52,112 53,170 54,187 55,204 56,198 57,188 58,106 59,66 60,126 61,163 62,198 63,222 64,216 65,193 66,112 67,66 68,128 69,168 70,202 71,224 72,252 73,164 74,96 75,67 76,130 77,170 78,192 79,227 80,250"/>
<polyline stroke="#a52a2a" stroke-width="4.4" points="0,348 1,327 2,321 3,355 4,367 5,365 6,365 7,361 8,367 9,303 10,315 11,350 12,376 13,380 14,361 15,262 16,235 17,215 18,219 19,237 20,252 21,252 22,237 23,233 24,203 25,197 26,201 27,220 28,230 29,241 30,238 31,214 32,195 33,196 34,200 35,259 36,301 37,291 38,277 39,240 40,199 41,198 42,209 43,246 44,265 45,274 46,267 47,244 48,200 49,195 50,213 51,253 52,270 53,266 54,245 55,213 56,201 57,207 58,229 59,263 60,256 61,266 62,248 63,237 64,219 65,210 66,221 67,290 68,315 69,306 70,263 71,250 72,258 73,217 74,276 75,314 76,324 77,333 78,276 79,272 80,261"/>
</g>
<rect x="225" y="1228" width="2489" height="214.6" fill="none" stroke="#000" stroke-width="2"/>
<path class="b" d="M225 1442.6v11M533 1442.6v11M840 1442.6v11M1147.5 1442.6v11M1454 1442.6v11M1761 1442.6v11M2068 1442.6v11M2376 1442.6v11M2683 1442.6v11M225 1318h-11M225 1442.6h-11"/>
<text class="y" x="202" y="1329">20</text><text class="y" x="202" y="1453">0</text>
<text transform="translate(81,1360) rotate(-90)" style="font-size:26.5px;font-weight:bold;text-anchor:middle;fill:#f00">2m Temp(°C)</text>
<text transform="translate(112,1358) rotate(-90)" style="font-size:26.5px;font-weight:bold;text-anchor:middle;fill:#a52a2a">2m DewTemp(°C)</text>
<text class="x" x="225" y="1484">27 Feb</text><text class="x" x="225" y="1512">06:00</text><text class="x" x="533" y="1484">28 Feb</text><text class="x" x="533" y="1512">12:00</text><text class="x" x="840" y="1484">01 Mar</text><text class="x" x="840" y="1512">18:00</text><text class="x" x="1147.5" y="1484">03 Mar</text><text class="x" x="1147.5" y="1512">00:00</text><text class="x" x="1454" y="1484">04 Mar</text><text class="x" x="1454" y="1512">06:00</text><text class="x" x="1761" y="1484">05 Mar</text><text class="x" x="1761" y="1512">12:00</text><text class="x" x="2068" y="1484">06 Mar</text><text class="x" x="2068" y="1512">18:00</text><text class="x" x="2376" y="1484">08 Mar</text><text class="x" x="2376" y="1512">00:00</text><text class="x" x="2683" y="1484">09 Mar</text><text class="x" x="2683" y="1512">06:00</text>

<!-- RH -->
<g fill="#f8f8f8"><rect x="225" y="1551" width="369" height="193.6"/><rect x="963" y="1551" width="368" height="193.6"/><rect x="1700" y="1551" width="368" height="193.6"/><rect x="2437" y="1551" width="277" height="193.6"/></g>
<g class="ns" transform="translate(240.4,1200) scale(30.73,.614)">
<polyline fill="none" stroke="#800080" stroke-width="4" stroke-linejoin="round" points="0,751 1,771 2,801 3,828 4,803 5,770 6,742 7,728 8,704 9,735 10,795 11,828 12,803 13,800 14,737 15,583 16,574 17,598 18,698 19,757 20,731 21,668 22,607 23,581 24,574 25,593 26,678 27,748 28,707 29,675 30,627 31,574 32,574 33,595 34,686 35,788 36,782 37,732 38,654 39,583 40,575 41,589 42,701 43,776 44,748 45,725 46,661 47,595 48,575 49,587 50,716 51,787 52,766 53,715 54,668 55,591 56,577 57,608 58,735 59,790 60,745 61,720 62,657 63,600 64,575 65,603 66,723 67,805 68,789 69,756 70,673 71,620 72,587 73,660 74,782 75,818 76,793 77,775 78,700 79,650 80,596"/>
<g fill="#800080">
<ellipse cx="0" cy="751" rx=".16" ry="8"/><ellipse cx="1" cy="771" rx=".16" ry="8"/><ellipse cx="2" cy="801" rx=".16" ry="8"/><ellipse cx="3" cy="828" rx=".16" ry="8"/><ellipse cx="4" cy="803" rx=".16" ry="8"/><ellipse cx="5" cy="770" rx=".16" ry="8"/><ellipse cx="6" cy="742" rx=".16" ry="8"/><ellipse cx="7" cy="728" rx=".16" ry="8"/><ellipse cx="8" cy="704" rx=".16" ry="8"/><ellipse cx="9" cy="735" rx=".16" ry="8"/><ellipse cx="10" cy="795" rx=".16" ry="8"/><ellipse cx="11" cy="828" rx=".16" ry="8"/><ellipse cx="12" cy="803" rx=".16" ry="8"/><ellipse cx="13" cy="800" rx=".16" ry="8"/><ellipse cx="14" cy="737" rx=".16" ry="8"/><ellipse cx="15" cy="583" rx=".16" ry="8"/><ellipse cx="16" cy="574" rx=".16" ry="8"/><ellipse cx="17" cy="598" rx=".16" ry="8"/><ellipse cx="18" cy="698" rx=".16" ry="8"/><ellipse cx="19" cy="757" rx=".16" ry="8"/><ellipse cx="20" cy="731" rx=".16" ry="8"/><ellipse cx="21" cy="668" rx=".16" ry="8"/><ellipse cx="22" cy="607" rx=".16" ry="8"/><ellipse cx="23" cy="581" rx=".16" ry="8"/><ellipse cx="24" cy="574" rx=".16" ry="8"/><ellipse cx="25" cy="593" rx=".16" ry="8"/><ellipse cx="26" cy="678" rx=".16" ry="8"/><ellipse cx="27" cy="748" rx=".16" ry="8"/><ellipse cx="28" cy="707" rx=".16" ry="8"/><ellipse cx="29" cy="675" rx=".16" ry="8"/><ellipse cx="30" cy="627" rx=".16" ry="8"/><ellipse cx="31" cy="574" rx=".16" ry="8"/><ellipse cx="32" cy="574" rx=".16" ry="8"/><ellipse cx="33" cy="595" rx=".16" ry="8"/><ellipse cx="34" cy="686" rx=".16" ry="8"/><ellipse cx="35" cy="788" rx=".16" ry="8"/><ellipse cx="36" cy="782" rx=".16" ry="8"/><ellipse cx="37" cy="732" rx=".16" ry="8"/><ellipse cx="38" cy="654" rx=".16" ry="8"/><ellipse cx="39" cy="583" rx=".16" ry="8"/><ellipse cx="40" cy="575" rx=".16" ry="8"/><ellipse cx="41" cy="589" rx=".16" ry="8"/><ellipse cx="42" cy="701" rx=".16" ry="8"/><ellipse cx="43" cy="776" rx=".16" ry="8"/><ellipse cx="44" cy="748" rx=".16" ry="8"/><ellipse cx="45" cy="725" rx=".16" ry="8"/><ellipse cx="46" cy="661" rx=".16" ry="8"/><ellipse cx="47" cy="595" rx=".16" ry="8"/><ellipse cx="48" cy="575" rx=".16" ry="8"/><ellipse cx="49" cy="587" rx=".16" ry="8"/><ellipse cx="50" cy="716" rx=".16" ry="8"/><ellipse cx="51" cy="787" rx=".16" ry="8"/><ellipse cx="52" cy="766" rx=".16" ry="8"/><ellipse cx="53" cy="715" rx=".16" ry="8"/><ellipse cx="54" cy="668" rx=".16" ry="8"/><ellipse cx="55" cy="591" rx=".16" ry="8"/><ellipse cx="56" cy="577" rx=".16" ry="8"/><ellipse cx="57" cy="608" rx=".16" ry="8"/><ellipse cx="58" cy="735" rx=".16" ry="8"/><ellipse cx="59" cy="790" rx=".16" ry="8"/><ellipse cx="60" cy="745" rx=".16" ry="8"/><ellipse cx="61" cy="720" rx=".16" ry="8"/><ellipse cx="62" cy="657" rx=".16" ry="8"/><ellipse cx="63" cy="600" rx=".16" ry="8"/><ellipse cx="64" cy="575" rx=".16" ry="8"/><ellipse cx="65" cy="603" rx=".16" ry="8"/><ellipse cx="66" cy="723" rx=".16" ry="8"/><ellipse cx="67" cy="805" rx=".16" ry="8"/><ellipse cx="68" cy="789" rx=".16" ry="8"/><ellipse cx="69" cy="756" rx=".16" ry="8"/><ellipse cx="70" cy="673" rx=".16" ry="8"/><ellipse cx="71" cy="620" rx=".16" ry="8"/><ellipse cx="72" cy="587" rx=".16" ry="8"/><ellipse cx="73" cy="660" rx=".16" ry="8"/><ellipse cx="74" cy="782" rx=".16" ry="8"/><ellipse cx="75" cy="818" rx=".16" ry="8"/><ellipse cx="76" cy="793" rx=".16" ry="8"/><ellipse cx="77" cy="775" rx=".16" ry="8"/><ellipse cx="78" cy="700" rx=".16" ry="8"/><ellipse cx="79" cy="650" rx=".16" ry="8"/><ellipse cx="80" cy="596" rx=".16" ry="8"/>
</g></g>
<rect x="225" y="1551" width="2489" height="193.6" fill="none" stroke="#000" stroke-width="2"/>
<path class="b" d="M225 1744.6v11M533 1744.6v11M840 1744.6v11M1147.5 1744.6v11M1454 1744.6v11M1761 1744.6v11M2068 1744.6v11M2376 1744.6v11M2683 1744.6v11M225 1551h-11M225 1648h-11M225 1744.6h-11"/>
<text class="y" x="202" y="1562">100</text><text class="y" x="202" y="1659">50</text><text class="y" x="202" y="1755">0</text>
<text class="lab" style="fill:#800080" transform="translate(77,1650) rotate(-90)">RH (%)</text>
<text class="x" x="225" y="1785">27 Feb</text><text class="x" x="225" y="1813">06:00</text><text class="x" x="533" y="1785">28 Feb</text><text class="x" x="533" y="1813">12:00</text><text class="x" x="840" y="1785">01 Mar</text><text class="x" x="840" y="1813">18:00</text><text class="x" x="1147.5" y="1785">03 Mar</text><text class="x" x="1147.5" y="1813">00:00</text><text class="x" x="1454" y="1785">04 Mar</text><text class="x" x="1454" y="1813">06:00</text><text class="x" x="1761" y="1785">05 Mar</text><text class="x" x="1761" y="1813">12:00</text><text class="x" x="2068" y="1785">06 Mar</text><text class="x" x="2068" y="1813">18:00</text><text class="x" x="2376" y="1785">08 Mar</text><text class="x" x="2376" y="1813">00:00</text><text class="x" x="2683" y="1785">09 Mar</text><text class="x" x="2683" y="1813">06:00</text>

<!-- SLP -->
<g fill="#f8f8f8"><rect x="225" y="1853" width="369" height="214.6"/><rect x="963" y="1853" width="368" height="214.6"/><rect x="1700" y="1853" width="368" height="214.6"/><rect x="2437" y="1853" width="277" height="214.6"/></g>
<g class="ns" transform="translate(240.4,1200) scale(30.73,.614)">
<polyline fill="none" stroke="#00008b" stroke-width="5" stroke-linejoin="round" points="0,1253 1,1237 2,1262 3,1352 4,1391 5,1383 6,1367 7,1360 8,1358 9,1304 10,1313 11,1380 12,1394 13,1396 14,1353 15,1345 16,1308 17,1260 18,1278 19,1351 20,1378 21,1364 22,1310 23,1304 24,1260 25,1208 26,1226 27,1304 28,1328 29,1316 30,1267 31,1271 32,1254 33,1211 34,1218 35,1291 36,1317 37,1290 38,1227 39,1237 40,1232 41,1190 42,1208 43,1292 44,1329 45,1315 46,1248 47,1267 48,1263 49,1213 50,1238 51,1344 52,1367 53,1346 54,1286 55,1260 56,1242 57,1172 58,1197 59,1269 60,1305 61,1272 62,1227 63,1187 64,1163 65,1109 66,1133 67,1212 68,1245 69,1218 70,1164 71,1141 72,1108 73,1079 74,1104 75,1187 76,1227 77,1211 78,1168 79,1158 80,1114"/>
</g>
<rect x="225" y="1853" width="2489" height="214.6" fill="none" stroke="#000" stroke-width="2"/>
<path class="b" d="M225 2067.6v11M533 2067.6v11M840 2067.6v11M1147.5 2067.6v11M1454 2067.6v11M1761 2067.6v11M2068 2067.6v11M2376 2067.6v11M2683 2067.6v11M225 1894h-11M225 1953h-11M225 2011.6h-11"/>
<text class="y" x="202" y="1905">1012.5</text><text class="y" x="202" y="1964">1010.0</text><text class="y" x="202" y="2022">1007.5</text>
<text class="lab" style="fill:#00008b" transform="translate(77,1962) rotate(-90)">SLP (hPa)</text>
<text class="x" x="225" y="2108">27 Feb</text><text class="x" x="225" y="2136">06:00</text><text class="x" x="533" y="2108">28 Feb</text><text class="x" x="533" y="2136">12:00</text><text class="x" x="840" y="2108">01 Mar</text><text class="x" x="840" y="2136">18:00</text><text class="x" x="1147.5" y="2108">03 Mar</text><text class="x" x="1147.5" y="2136">00:00</text><text class="x" x="1454" y="2108">04 Mar</text><text class="x" x="1454" y="2136">06:00</text><text class="x" x="1761" y="2108">05 Mar</text><text class="x" x="1761" y="2136">12:00</text><text class="x" x="2068" y="2108">06 Mar</text><text class="x" x="2068" y="2136">18:00</text><text class="x" x="2376" y="2108">08 Mar</text><text class="x" x="2376" y="2136">00:00</text><text class="x" x="2683" y="2108">09 Mar</text><text class="x" x="2683" y="2136">06:00</text>
</svg>
</body></html>
